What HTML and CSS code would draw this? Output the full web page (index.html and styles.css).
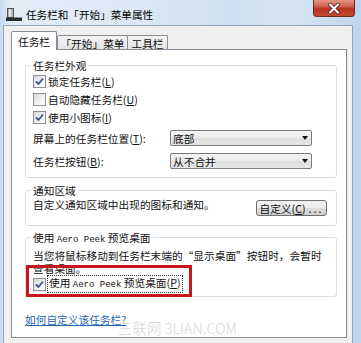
FILE: index.html
```html
<!DOCTYPE html>
<html lang="zh-CN">
<head>
<meta charset="utf-8">
<title>任务栏和「开始」菜单属性</title>
<link rel="stylesheet" href="styles.css">
</head>
<body>
<div class="window">
  <div class="titlebar">
    <svg class="app-icon" width="16" height="13" viewBox="0 0 16 13">
      <rect x="1.5" y="0.5" width="6" height="9" fill="#b8b8b8" stroke="#555" stroke-width="1"/>
      <rect x="3" y="1.5" width="2" height="7" fill="#e8e8e8"/>
      <rect x="0" y="9.5" width="16" height="3.5" fill="#2c2c2c"/>
    </svg>
    <span class="title">任务栏和「开始」菜单属性</span>
    <div class="close">
      <svg width="14" height="11" viewBox="0 0 14 11">
        <path d="M3 1.5 L11 9.5 M11 1.5 L3 9.5" stroke="#5a1a14" stroke-width="3.6" stroke-linecap="round"/>
        <path d="M3 1.5 L11 9.5 M11 1.5 L3 9.5" stroke="#ffffff" stroke-width="2" stroke-linecap="round"/>
      </svg>
    </div>
  </div>
  <div class="client">
    <div class="tabs">
      <div class="tab active">任务栏</div>
      <div class="tab t2">「开始」菜单</div>
      <div class="tab t3">工具栏</div>
    </div>
    <div class="panel">
      <div class="group g1">
        <div class="group-title">任务栏外观</div>
        <div class="check-row"><span class="cb"><svg width="11" height="11" viewBox="0 0 11 11"><path d="M2 5.5 L4.5 8 L9 2.5" fill="none" stroke="#3d5290" stroke-width="1.8"/></svg></span><span>锁定任务栏(<u>L</u>)</span></div>
        <div class="check-row"><span class="cb"></span><span>自动隐藏任务栏(<u>U</u>)</span></div>
        <div class="check-row"><span class="cb"><svg width="11" height="11" viewBox="0 0 11 11"><path d="M2 5.5 L4.5 8 L9 2.5" fill="none" stroke="#3d5290" stroke-width="1.8"/></svg></span><span>使用小图标(<u>I</u>)</span></div>
        <div class="select-row first">
          <span class="select-label">屏幕上的任务栏位置(<u>T</u>):</span>
          <div class="combo"><span>底部</span><span class="arrow"></span></div>
        </div>
        <div class="select-row second">
          <span class="select-label">任务栏按钮(<u>B</u>):</span>
          <div class="combo"><span>从不合并</span><span class="arrow"></span></div>
        </div>
      </div>

      <div class="group g2">
        <div class="group-title">通知区域</div>
        <div class="notify-row">
          <span class="notify-text">自定义通知区域中出现的图标和通知。</span>
          <div class="button">自定义(<u>C</u>)<span class="dots">...</span></div>
        </div>
      </div>

      <div class="group g3">
        <div class="group-title">使用 <span class="mono">Aero Peek</span> 预览桌面</div>
        <p class="peek-text">当您将鼠标移动到任务栏末端的“显示桌面”按钮时，会暂时<br>查看桌面。</p>
        <div class="check-row"><span class="cb"><svg width="11" height="11" viewBox="0 0 11 11"><path d="M2 5.5 L4.5 8 L9 2.5" fill="none" stroke="#3d5290" stroke-width="1.8"/></svg></span><span class="focus">使用 <span class="mono">Aero Peek</span> 预览桌面(<u>P</u>)</span></div>
        <div class="highlight"></div>
      </div>

      <a class="help-link" href="#">如何自定义该任务栏?</a>
      <div class="watermark">三联网 3LIAN.COM</div>
    </div>
  </div>
</div>
</body>
</html>
```

FILE: styles.css
```css
html, body {
  margin: 0;
  padding: 0;
}
body {
  width: 361px;
  height: 343px;
  overflow: hidden;
  font-family: "Noto Sans CJK SC", "Microsoft YaHei", sans-serif;
  font-size: 10.7px;
  line-height: 13px;
  color: #111;
}
.window {
  height: 343px;
  display: flex;
  flex-direction: column;
  background: linear-gradient(to right, #c9dbee 0px, #e3edf8 12px, #dbe8f5 40%, #cddff1 65%, #d6e5f3 80%, #bfd5ec 100%);
}
.titlebar {
  height: 25px;
  display: flex;
  align-items: flex-start;
  padding-left: 6px;
  flex: none;
}
.app-icon {
  margin-top: 8px;
  flex: none;
}
.title {
  margin-left: 4px;
  margin-top: 8px;
  font-size: 10.6px;
  color: #000;
}
.close {
  margin-left: auto;
  margin-right: 6px;
  width: 42px;
  height: 17px;
  box-sizing: border-box;
  border: 1px solid #6e2b26;
  border-top: none;
  border-radius: 0 0 4px 4px;
  background: linear-gradient(#e39584 0%, #d0604f 40%, #b8321f 55%, #c44a32 100%);
  display: flex;
  align-items: center;
  justify-content: center;
}
.client {
  flex: 1;
  margin: 0 8px 0 3px;
  background: #f0f0f0;
  border: 1px solid #97a5b5;
  border-bottom: none;
}
.tabs {
  display: flex;
  align-items: flex-end;
  padding-left: 7px;
  margin-top: 5px;
  margin-bottom: -1px;
  position: relative;
  z-index: 1;
}
.tab {
  box-sizing: border-box;
  border: 1px solid #898c95;
  border-bottom: none;
  display: flex;
  align-items: center;
  justify-content: center;
  border-radius: 2px 2px 0 0;
}
.tab.active {
  width: 46px;
  height: 19px;
  background: #fff;
}
.tab.t2,
.tab.t3 {
  height: 14px;
  margin-bottom: 1px;
  background: linear-gradient(#f3f3f3, #e4e4e4);
  padding-top: 1px;
}
.tab.t2 {
  width: 71px;
}
.tab.t3 {
  width: 41px;
  margin-left: -1px;
}
.panel {
  position: relative;
  box-sizing: border-box;
  margin-left: 7px;
  width: 336px;
  height: 289px;
  background: #fff;
  border: 1px solid #898c95;
  padding: 0 9px 0 13px;
}
.group {
  border: 1px solid #d5dfe5;
  border-radius: 3px;
  padding: 0 9px 0 7px;
}
.group-title {
  width: fit-content;
  margin: -7px 0 0 -2px;
  padding: 0 2px;
  background: #fff;
  line-height: 13px;
}
.g1 {
  margin-top: 15px;
  padding-bottom: 8px;
}
.g2 {
  margin-top: 12px;
  padding-bottom: 9px;
}
.g3 {
  margin-top: 11px;
  padding-bottom: 3px;
  position: relative;
}
.check-row {
  height: 18px;
  display: flex;
  align-items: center;
}
.cb {
  width: 13px;
  height: 13px;
  box-sizing: border-box;
  border: 1px solid #8e8f8f;
  background: linear-gradient(135deg, #d6d8db 0%, #eef0f1 55%, #ffffff 100%);
  margin-right: 2px;
  display: flex;
  align-items: center;
  justify-content: center;
  flex: none;
}
.select-row {
  display: flex;
  align-items: center;
  height: 16px;
}
.select-row.first {
  margin-top: 4px;
}
.select-row.second {
  margin-top: 7px;
}
.select-label {
  width: 137px;
  flex: none;
}
.combo {
  width: 142px;
  height: 16px;
  box-sizing: border-box;
  border: 1px solid #7a7a7a;
  border-radius: 2px;
  background: linear-gradient(#f4f4f4 0%, #ececec 50%, #dfdfdf 51%, #e6e6e6 100%);
  display: flex;
  align-items: center;
  justify-content: space-between;
  padding: 0 3px 0 2px;
}
.arrow {
  width: 0;
  height: 0;
  border-left: 3.5px solid transparent;
  border-right: 3.5px solid transparent;
  border-top: 4px solid #111;
}
.notify-row {
  display: flex;
  justify-content: space-between;
  align-items: flex-start;
  padding-top: 1px;
}
.button {
  margin-top: 2px;
  width: 71px;
  height: 16px;
  box-sizing: border-box;
  border: 1px solid #707070;
  border-radius: 3px;
  background: linear-gradient(#f2f2f2 0%, #ebebeb 50%, #dddddd 51%, #cfcfcf 100%);
  display: flex;
  align-items: center;
  justify-content: center;
  line-height: 13px;
}
.dots {
  letter-spacing: 2px;
  margin-left: 3px;
}
.mono {
  font-family: "Liberation Mono", "DejaVu Sans Mono", monospace;
  font-size: 9px;
}
.peek-text {
  margin: 0;
  padding-top: 2px;
  line-height: 13px;
  white-space: nowrap;
}
.focus {
  outline: 1px dotted #333;
  outline-offset: 0;
  padding: 0 1px;
  line-height: 13px;
}
.highlight {
  position: absolute;
  left: 0;
  top: 27px;
  width: 166px;
  height: 32px;
  box-sizing: border-box;
  border: 3px solid #c8161e;
}
.help-link {
  display: block;
  width: fit-content;
  margin-top: 16px;
  color: #1f66b5;
  text-decoration: underline;
  line-height: 13px;
}
.watermark {
  position: absolute;
  left: 106px;
  top: 270px;
  font-size: 14.5px;
  line-height: 16px;
  font-weight: 300;
  color: #d6d6d6;
  white-space: nowrap;
}
```
